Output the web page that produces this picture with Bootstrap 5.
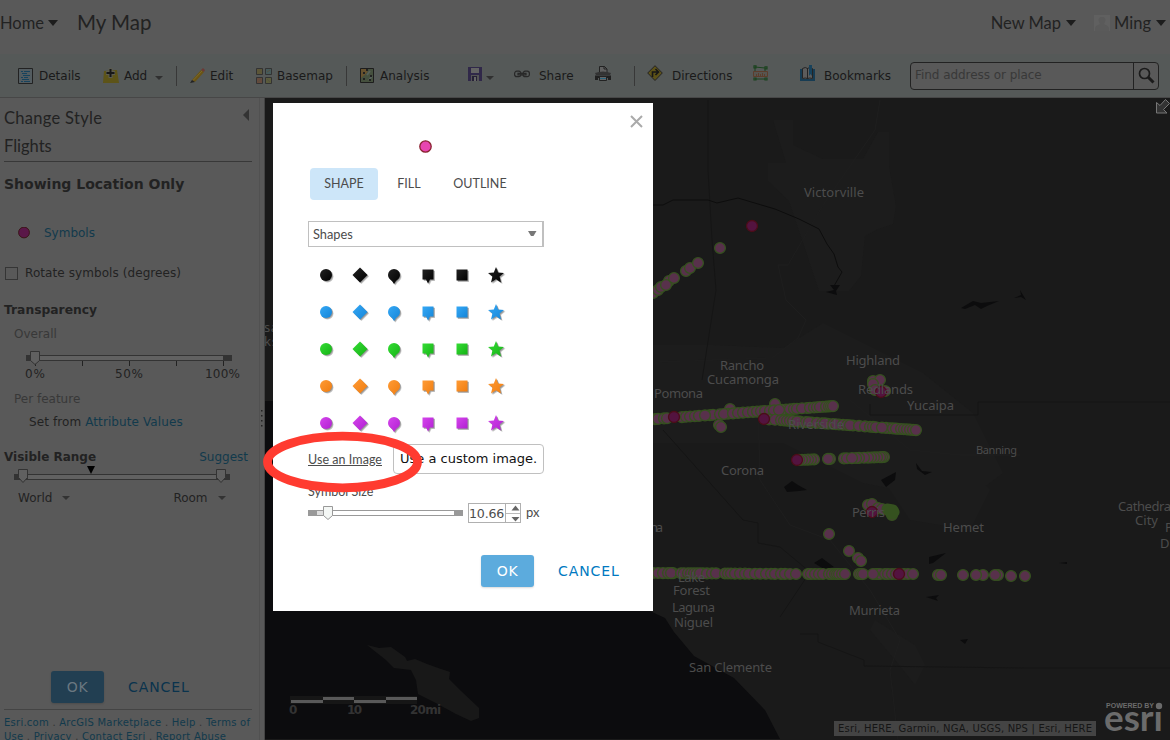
<!DOCTYPE html>
<html lang="en">
<head>
<meta charset="utf-8">
<meta name="viewport" content="width=device-width, initial-scale=1">
<title>My Map</title>
<link href="https://cdn.jsdelivr.net/npm/bootstrap@5.3.0/dist/css/bootstrap.min.css" rel="stylesheet">
<style>
body{width:1170px;height:740px;overflow:hidden;background:#595959;color:#1f1f1f;font:12px/16px "DejaVu Sans",sans-serif}
.avenir{font-family:Lato,"Noto Sans",sans-serif}
svg{display:block;flex:none}
a{text-decoration:none}
.topbar{height:54px;font-size:16.500px;color:#222}
.topbar .title{font-size:20.500px;margin:-10px 0 0 19px}
.topbar svg,.home,.newmap,.ming{margin-top:-8px}
.topbar .nm-caret{margin-left:5px}.topbar .avatar{margin-left:18px}.ming{margin-left:4px}.topbar .mg-caret{margin:-8px 4px 0 5px}
.toolbar{height:44px;background:#555958;border-bottom:1px solid #474747;padding-left:18px;display:grid;
 grid-template-columns:85px 73px 14px 66px 90px 14px 108px 46px 81px 39px 13px 106px 47px 110px 249px;align-items:center;color:#1a1a1a}
.tool{display:flex;align-items:center;white-space:nowrap}
.rule{width:1px;height:20px;background:#383838}
.finder{height:28px;border:1px solid #222;border-radius:4px;background:#595959;color:#383838}
.finder span{margin-top:-2px;letter-spacing:-.05px}
.find-btn{width:25px;border-left:1px solid #222;padding-left:4px}
.workspace{height:642px}
.side{width:265px;border-right:1px solid #444;background:#595959;color:#222}
.side-in{width:260px;border-right:1px solid #515151;padding-left:4px}
.rowx{display:flex;align-items:center;white-space:nowrap}
.lnk{color:#123a4c}
.muted{color:#383838}
.s-head{font-size:16.500px;height:40px;padding-right:10px;letter-spacing:.3px}
.s-head svg{margin-top:-6px}
.s-layer{font-size:16.500px;height:24px;padding-bottom:7px;margin-right:7px;border-bottom:1px solid #383838}
.s-title{font-size:14px;height:44px}
.s-sym{height:54px;padding-left:14px}.s-sym a{margin-left:13px}
.s-rot{height:26px;letter-spacing:.08px}.box{width:13px;height:13px;border:1px solid #353535;margin:0 7px 0 1px}
.s-tr{height:47px;font-size:12.300px}
.ind{height:2px;padding-left:10px}
.gap-sl{height:10px}
.s-per{height:33px}.s-set{height:14px;padding-left:25px;letter-spacing:.1px}
.s-vis{height:56px;padding-right:11px;margin-bottom:-19px}
.s-room{height:20px;padding-left:14px;gap:10px}.rm{margin-left:93px}
.s-btn{height:202px;padding:157px 0 0 47px;margin-right:7px;border-bottom:1px solid #444}
.foot{font-size:10px;line-height:14px;letter-spacing:.25px;color:#333;padding-top:6px;white-space:nowrap}
.btn-esri{width:53px;height:32px;border-radius:3px;padding:0;font:14px "DejaVu Sans",sans-serif;letter-spacing:.7px;background:#5cabdd;color:#fff;border:0;box-shadow:0 1px 2px rgba(0,0,0,.15)}
.dim-btn{background:#223f52;color:#6a7780}
.cancel{font-size:14px;letter-spacing:.9px;color:#0079c1}
.dimc{color:#0a334d;margin-left:24px}
.dialog{position:absolute;left:273px;top:103px;width:380px;height:508px;background:#fff;color:#4c4c4c;padding-left:35px}
.x-row{padding:12px 10px 0 0;height:37px}.cur{margin-bottom:15px}
.tabs{padding-left:2px;height:53px}
.tabx{height:32px;border-radius:4px;font-size:12.500px;width:68px;justify-content:center}
.t-fill{width:62px}.t-out{width:80px}
.tabx.on{background:#cde6f9}
.picker{width:236px;height:26px;border:1px solid #c0c0c0;border-right-width:2px;font-size:12.800px;padding:0 5px 0 4px}
.symgrid{display:grid;grid-template-columns:repeat(6,34px);grid-auto-rows:37px;padding:9.500px 0 0 1.300px;height:197px}
.use-row{height:30px}
.ui{font-size:12.500px;width:75px;white-space:nowrap;margin-top:2px;letter-spacing:.05px}
.tip{width:151px;height:30px;border:1px solid #c0c0c0;border-radius:4px;background:#fff;color:#111;font-size:13px;padding-left:6px;margin-left:10px}
.sz{font-size:12.500px;height:29px;padding-top:10px}
.spin{width:53px;height:20px;border:1px solid #b0b0b0;font-size:12.600px}
.spin span{width:37px;letter-spacing:-.2px;padding-top:2px}
.spin-arrows{width:15px;height:18px;border-left:1px solid #b0b0b0}
.px{margin:-2px 0 0 5px;font-size:13px}.acts{padding:32px 0 0 173px}
.ring{position:absolute;left:262px;top:430px;z-index:5}
.lbl{font-family:"Noto Sans",sans-serif;font-size:13px;fill:#4c4c4c}
</style>
</head>
<body class="position-relative">
<header class="topbar d-flex align-items-center avenir">
  <span class="home">Home</span>
  <svg width="10" height="6" class="ms-1"><path d="M0 0h10l-5 6z" fill="#1d1d1d"/></svg>
  <span class="title">My Map</span>
  <span class="ms-auto newmap">New Map</span>
  <svg width="10" height="6" class="nm-caret"><path d="M0 0h10l-5 6z" fill="#1d1d1d"/></svg>
  <svg width="16" height="16" class="avatar"><path d="M0 0h16v16H0z" fill="#606060"/><path d="M8 2c3 0 4 2 3 5l-1 2c1 1 4 1 5 4v3H1v-3c1-3 4-3 5-4L5 7C4 4 5 2 8 2" fill="#5a5a5a"/></svg>
  <span class="ming">Ming</span>
  <svg width="10" height="6" class="mg-caret"><path d="M0 0h10l-5 6z" fill="#1d1d1d"/></svg>
</header>
<nav class="toolbar">
  <div class="tool"><svg width="21" height="16"><path d="M.5.5h14v15H.5z" fill="#535c60" stroke="#222"/><path d="M3 3.500h2M6 3.500h6M4 5.500h5M5 7.500h7M3 9.500h2M6 9.500h4M4 11.500h7M3 13.500h2M6 13.500h6" stroke="#17435d" fill="none"/></svg>Details</div>
  <div class="tool"><svg width="21" height="16"><path d="M1 3l13-1 2 13H0z" fill="#5d5418"/><path d="M7.500 0v10M3 5h9" stroke="#5c5c50" stroke-width="4"/><path d="M7.500 1v8M3.500 5h8" stroke="#171717" stroke-width="2"/></svg>Add<svg width="8" height="4" class="ms-2 mt-1"><path d="M0 0h8l-4 4z" fill="#303030"/></svg></div>
  <i class="rule"></i>
  <div class="tool"><svg width="20" height="16"><path d="M2 12L11 2l3 2-9 10z" fill="#6a5414"/><path d="M3 12.500L12 3" stroke="#7d6a2a"/><path d="M11 2l2-2 2 2-1 2z" fill="#6b3a35"/><path d="M2 12l-2 3 5-1z" fill="#222"/></svg>Edit</div>
  <div class="tool"><svg width="21" height="16"><g stroke="#333" fill="#5c5638"><path d="M.5.5h6v6h-6z"/><path d="M9.500.5h6v6h-6z" fill="#465a5a"/><path d="M.5 9.500h6v6h-6z" fill="#654a3c"/><path d="M9.500 9.500h6v6h-6z" fill="#5b5c3c"/></g><path d="M11 4l3-2M2 14l3-3M11 11l3 3" stroke="#555040"/></svg>Basemap</div>
  <i class="rule"></i>
  <div class="tool"><svg width="20" height="15"><path d="M.5.5h13v14H.5z" fill="#45503e" stroke="#1d1d1d"/><path d="M1 10V1h7L7 5z" fill="#67522e"/><path d="M7 7l3-4M9 12l3-4" stroke="#55605a" stroke-width="2"/><path d="M6 1h2v2H6zM3 4h2v2H3zM10 7h2v2h-2zM3 10h2v2H3zM9 11h2v2H9z" fill="#222"/></svg>Analysis</div>
  <div class="tool"><svg width="14" height="14" class="mb-1"><path d="M0 0h14v14H0z" fill="#302849"/><path d="M3 1h8v5H3z" fill="#636363"/><path d="M3 8h8v6H3z" fill="#555"/><path d="M4 9h5v5H4z" fill="#252036"/><path d="M6 10h2v4H6z" fill="#666"/></svg><svg width="8" height="4" class="ms-1 mt-1"><path d="M0 0h8l-4 4z" fill="#303030"/></svg></div>
  <div class="tool"><svg width="25" height="8" class="mb-1"><g fill="none" stroke="#282828" stroke-width="1.200"><rect x=".6" y="1.200" width="6.400" height="5.400" rx="2.200"/><rect x="9" y="1.200" width="6.400" height="5.400" rx="2.200"/><path d="M4 3.400h8v1.400H4z"/></g></svg>Share</div>
  <div class="tool"><svg width="16" height="16" class="mb-1"><path d="M4.500 7V.5h5L12 3v4" fill="#606060" stroke="#222"/><path d="M9 0v3h3" fill="none" stroke="#222"/><path d="M0 7q8-3 16 0l-1 2H1z" fill="#333"/><path d="M0 9.500h16v4.500h-3v-2H3v2H0z" fill="#202020"/><path d="M4.500 10.500h7v4h-7z" fill="#666" stroke="#222"/><path d="M5 12.500h6" stroke="#28627b"/></svg></div>
  <i class="rule"></i>
  <div class="tool"><svg width="25" height="17" class="mb-1"><path d="M8 .7L15.300 8 8 15.500.7 8z" fill="#5d5218" stroke="#242424"/><path d="M5.500 12V7h5M8.500 4l3 3-3 3" fill="none" stroke="#171717" stroke-width="1.600"/></svg>Directions</div>
  <div class="tool"><svg width="15" height="17" class="mb-1"><g fill="none" stroke="#1b431f"><path d="M2 2l10 1M2 14h10M2 3v3M12 4v2" /><path d="M1 .8h2v2H1zM12 1.800h2v2h-2zM1 13h2v2H1zM12 13h2v2h-2z" stroke-width="1.200"/></g><path d="M.5 6.500h14v5H.5z" fill="#575550" stroke="#5c3d2c"/><path d="M3.500 9v2M5.500 8v3M7.500 9v2M9.500 8v3M11.500 9v2" stroke="#5c3d2c"/></svg></div>
  <div class="tool"><svg width="24" height="17" class="mb-1"><path d="M1 4v11h13V4" fill="none" stroke="#173c53" stroke-width="2"/><path d="M2.500 13.500V3.500q3-2 5 0 2-2 5 0v10q-3-1-5 0-2-1-5 0z" fill="#5c5c5c" stroke="#242424"/><path d="M7.500 3v11" stroke="#242424"/><path d="M9 0h3v11l-1.500-2L9 11z" fill="#17425c"/></svg>Bookmarks</div>
  <div class="finder d-flex align-items-center"><span class="ps-1 flex-fill">Find address or place</span><div class="h-100 d-flex align-items-center find-btn"><svg width="17" height="17"><circle cx="6.500" cy="6.500" r="5" fill="none" stroke="#1b1b1b" stroke-width="1.700"/><path d="M10 10l5.500 5.500" stroke="#1b1b1b" stroke-width="3"/></svg></div></div>
</nav>
<main class="d-flex workspace">
  <aside class="side d-flex">
    <div class="side-in">
      <div class="rowx avenir s-head">Change Style<svg width="6" height="12" class="ms-auto"><path d="M6 0v12L0 6z" fill="#333"/></svg></div>
      <div class="rowx avenir s-layer">Flights</div>
      <div class="rowx fw-bold s-title">Showing Location Only</div>
      <div class="rowx s-sym"><svg width="13" height="13"><circle cx="6" cy="5.500" r="5.400" fill="#5a1748" stroke="#3b1517"/></svg><a class="lnk">Symbols</a></div>
      <div class="rowx s-rot"><span class="box"></span>Rotate symbols (degrees)</div>
      <div class="rowx fw-bold s-tr">Transparency</div>
      <div class="rowx muted ind">Overall</div>
      <div class="gap-sl"></div>
      <svg width="250" height="37" viewBox="4 345 250 37"><path d="M26 355h206v6H26z" fill="#333"/><path d="M40 356h183v4H40z" fill="#616161"/><path d="M35.500 361v5M82.500 361v5M129.500 361v5M176.500 361v5M223.500 361v5" stroke="#222"/><path d="M30.500 351.500h9v9l-4.500 4-4.500-4z" fill="#606060" stroke="#333"/><g font-size="12" fill="#222"><text x="25" y="378" textLength="20">0%</text><text x="115" y="378" textLength="28">50%</text><text x="205" y="378" textLength="35">100%</text></g></svg>
      <div class="rowx muted ind s-per">Per feature</div>
      <div class="rowx s-set"><span>Set from <a class="lnk">Attribute Values</a></span></div>
      <div class="rowx s-vis"><b>Visible Range</b><a class="lnk ms-auto">Suggest</a></div>
      <svg width="250" height="22" viewBox="4 466 250 22"><path d="M14 474h216v6H14z" fill="#333"/><path d="M28 475h188v4H28z" fill="#616161"/><path d="M87 466h8l-4 8z" fill="#000"/><path d="M18.500 469.500h9v8l-4.500 5-4.500-5zM216.500 469.500h9v8l-4.500 5-4.500-5z" fill="#606060" stroke="#333"/></svg>
      <div class="rowx s-room"><span>World</span><svg width="8" height="4"><path d="M0 0h8l-4 4z" fill="#333"/></svg><span class="rm">Room</span><svg width="8" height="4"><path d="M0 0h8l-4 4z" fill="#333"/></svg></div>
      <div class="rowx s-btn"><button class="btn btn-esri dim-btn">OK</button><span class="cancel dimc">CANCEL</span></div>
      <div class="foot"><a class="lnk">Esri.com</a> . <a class="lnk">ArcGIS Marketplace</a> . <a class="lnk">Help</a> . <a class="lnk">Terms of</a><br><a class="lnk">Use</a> . <a class="lnk">Privacy</a> . <a class="lnk">Contact Esri</a> . <a class="lnk">Report Abuse</a></div>
    </div>
    <svg width="4" height="20" class="align-self-center"><path d="M1 1h1.500v1.500H1zM1 6h1.500v1.500H1zM1 11h1.500v1.500H1zM1 16h1.500v1.500H1z" fill="#222"/></svg>
  </aside>
  <svg width="905" height="642" viewBox="265 98 905 642" id="map"></svg>
</main>
<section class="dialog">
  <div class="d-flex justify-content-end x-row"><svg width="13" height="13"><path d="M1 1l11 11M12 1L1 12" stroke="#aaa" stroke-width="2"/></svg></div>
  <svg width="236" height="13" class="cur"><circle cx="117.500" cy="6.500" r="5.700" fill="#e846b0" stroke="#8a2430" stroke-width="1.300"/></svg>
  <div class="d-flex tabs avenir"><div class="tabx on rowx">SHAPE</div><div class="tabx rowx t-fill">FILL</div><div class="tabx rowx t-out">OUTLINE</div></div>
  <div class="picker d-flex align-items-center justify-content-between avenir"><span>Shapes</span><svg width="10" height="6"><path d="M1 0h8.500L6.500 5h-2.500z" fill="#777"/></svg></div>
  <div class="symgrid" id="sym"></div>
  <div class="d-flex align-items-center use-row"><span class="avenir text-decoration-underline ui">Use an Image</span><div class="tip rowx">Use a custom image.</div></div>
  <div class="avenir sz">Symbol Size</div>
  <div class="d-flex align-items-center"><svg width="160" height="20" viewBox="308 503 160 20"><path d="M308 510h155v6H308z" fill="#999"/><path d="M317 511h7v4h-7z" fill="#ddd"/><path d="M328 511h126v4H328z" fill="#fff"/><path d="M323.500 506.500h9v9l-4.500 4-4.500-4z" fill="#f4f7f5" stroke="#999"/></svg><div class="spin d-flex align-items-center"><span>10.66</span><div class="spin-arrows"><svg width="14" height="18"><path d="M5.500 6.500h8l-4-5zM5.500 13h8l-4 4.500z" fill="#666"/><path d="M0 9.500h14" stroke="#bbb"/></svg></div></div><span class="px avenir">px</span></div>
  <div class="d-flex align-items-center acts"><button class="btn btn-esri">OK</button><span class="cancel ms-4">CANCEL</span></div>
</section>
<svg class="ring" width="162" height="64" viewBox="262 430 162 64"><ellipse cx="342.500" cy="462" rx="75" ry="25.800" fill="none" stroke="#ff3b30" stroke-width="8.800"/></svg>
<script>
// Symbol palette: six shapes in five colours
const shapes=['<circle cx="17" cy="18" r="6"/>','<path d="M17 10.500l7.500 7.500-7.500 7.500L9.500 18z"/>','<path d="M17 12a6 6 0 0 1 6 6c0 3-2 4-4 6l-2 3-2-3c-2-2-4-3-4-6a6 6 0 0 1 6-6z"/>','<path d="M11.500 12.500h11v10h-3.500l-2 4-2-4h-3.500z"/>','<path d="M11.500 12.500h11v11h-11z"/>','<path d="M17 10l2.200 5.500 5.800.4-4.400 3.700 1.400 5.800-5-3.200-5 3.200 1.400-5.800L9 15.900l5.800-.4z"/>'];
const cols=[['#222','#000'],['#35a8f5','#1585d8'],['#35dc35','#15b315'],['#ff9b35','#f07d10'],['#d545ec','#b120d2']];
document.getElementById('sym').innerHTML=cols.map((c,i)=>shapes.map((s,j)=>`<svg width="34" height="37"><defs><linearGradient id="g${i}${j}" x1="0" y1="0" x2="1" y2="1"><stop stop-color="${c[0]}"/><stop offset="1" stop-color="${c[1]}"/></linearGradient></defs><g fill="#000" opacity=".22" transform="translate(1.500 1.500)">${s}</g><g fill="#000" opacity=".25" transform="translate(.8 .8)">${s}</g><g fill="url(#g${i}${j})">${s}</g></svg>`).join('')).join('');
// Map
let m='<path d="M265 98h905v642H265z" fill="#1a1a1a"/>';
m+='<path d="M265 401h20l365 210 15 7 9 14 20 24 40 22 31 32 15 29H265z" fill="#0c0c0e"/>';
m+='<path d="M367 645l12 3 12-1 14 10 2 4 8-2 12 5 14 5 9 3-1 7 12 12 18 17 0 10-8 3-15-7-22-12-16-8-2-14-5-10-17-2-8-8z" fill="#181818"/>';
m+='<g fill="#1c1c1c"><path d="M773 120h20v25l30 14h40l15-27h11v34l7 40-3 18-15 5-13 7-4 40-12 15-30 0-10-30-20-60-21-20v-18h18zM653 345l60 0 70 3 40-25 40 20 60 30 50 40 30 60-40 30-100-20-80-40-130 0zM870 410l60 20 60 60-20 40-60-10-40-60zM875 620l40 25 10 20-10 20-20-25-25-30z"/></g>';
m+='<g fill="none" stroke="#1e1e1e"><path d="M880 100l-5 30-52 75-35 60-10 0 8 35 20 20-8 18-26 20-119 4M758 400l2 80 30 45 40 15 40 50 30 50-10 30 8 70M850 400l60 50 50 5 60 0"/></g><g fill="none" stroke="#151515"><path d="M708 100v70l4 70 4 50-14 90M663 430l80 90 15 3v20l22 4 30 25-30 45M870 404v11h108v-13h192M800 634h18v8l46 18v6l160 2h147"/></g>';
m+='<path d="M653 205l10 0 10-5h35l9 3 21-5 20 6 17 5 24 10 20 10 8 15 7 10 4 13 4 5-8 14" fill="none" stroke="#0d0d0d"/>';
m+='<g fill="#0c0c0d"><path d="M826 292l8-2-4-5h10l-4 6 1 4zM961 308l12-7 8 2 18-2-12 5-6 3-6-4-10 4zM1014 298l7-3-1-5 6 10-5-3zM784 487l8-6 6 4 9 5-8 1-12 1zM881 480l15-8-1 8-9 7zM916 463l6 8 10 1-7 3-8-6zM814 563l8-5 12 9-10 2zM929 557l17-4-13 10-4 1zM926 597l13-2-3 3 2 3zM1059 563l8-1v2zM960 640l8-1-3 5z"/></g>';
const dot=(x,y)=>`<circle cx="${x}" cy="${y}" r="5.400" fill="#58314b" stroke="#35511f" stroke-width="1.300"/>`;
const sel=(x,y)=>`<circle cx="${x}" cy="${y}" r="5.500" fill="#53133f" stroke="#4b0d18" stroke-width="1.300"/>`;
// A flight path: dots along the line from (x0, y0) to (x1, y1)
const track=(x0,y0,x1,y1,xs)=>xs.map(x=>dot(x,+(y0+(x-x0)*(y1-y0)/(x1-x0)).toFixed(1))).join('');
m+=[[653,293],[658,290],[661,287],[669,281],[666,285],[674,278],[686,271],[690,268],[698,263],[720,248],[719,425],[721,427],[775,404],[730,409]].map(p=>dot(...p)).join('');
m+=track(656,419,834,406,[655,658,664,667,682,686,690,695,699,710,713,705,720,728,724,733,738,743,748,753,757,761,765,770,774,786,782,779,790,794,797,807,802,810,814,817,823,820,826,829,831,833]);
m+=track(764,419,915,430,[769,775,781,784,787,790,793,800,797,806,812,809,817,822,828,825,833,839,836,843,847,853,850,859,865,870,873,876,890,886,882,893,898,896,901,904,907,910,913,916]);
m+=track(797,460,885,457,[814,811,808,805,802,799,830,828,884,882,880,877,874,871,868,864,859,856,844,847,852]);
m+=track(653,573,796,574,[653,658,663,668,673,671,681,684,688,691,694,697,703,700,707,712,716,725,728,731,735,740,745,749,755,760,766,771,775,781,785,790,796]);
m+=[808,811,815,819,823,829,832,835,837,839,842,845,859,861,863,876,878,880,873,885,888,892,896,904,908,913].map(x=>dot(x,574)).join('');
m+=[938,941,963,983,976,998,995,1011,1025].map(x=>dot(x,x>1000?576:575)).join('').replace('x','x');
m+=[[829,534],[849,551],[858,558],[861,561],[873,381],[880,380],[873,384],[885,391],[875,390],[868,505],[872,504],[878,508],[882,509],[892,515]].map(p=>dot(...p)).join('');
m+='<path d="M887 509l6 1 1 2-2 2z" stroke="#35511f" fill="#35511f" stroke-width="11" stroke-linejoin="round"/>';
m+=[[752,226],[674,417],[764,419],[797,460],[881,392],[872,512],[899,574]].map(p=>sel(...p)).join('');
[['Victorville',804,197,60],['Rancho',720,370,44],['Cucamonga',707,384,72],['Pomona',654,398,49],['Highland',846,365,54],['Redlands',858,394,55],['Yucaipa',907,410,47],['Riverside',788,429,56],['Corona',721,475,43],['Perris',852,517,33],['Hemet',943,532,41],['Lake',678,582,27],['Forest',673,595,37],['Laguna',672,612,43],['Niguel',674,627,39],['Murrieta',849,615,51],['San Clemente',689,672,83],['Cathedral',1118,511,56],['City',1135,525,23],['P',1165,532,7],['D',1160,548,9],['sa',264,332,14],['ks',264,346,14],['na',650,532,13]].forEach(a=>m+=`<text class="lbl" x="${a[1]}" y="${a[2]}" textLength="${a[3]}">${a[0]}</text>`);
m+='<text class="lbl" x="976" y="454" textLength="41" style="font-size:11px">Banning</text>';
m+='<path d="M290 696h127v8H290z" fill="#161616"/><path d="M291 700h32v3h-32zM323 697h31v3h-31zM354 700h32v3h-32zM386 697h31v3h-31z" fill="#595959"/><g font-size="12" font-weight="bold" fill="#333"><text x="289" y="714">0</text><text x="347" y="714" textLength="15">10</text><text x="410" y="714" textLength="31">20mi</text></g>';
m+='<path d="M834 721h262v15H834z" fill="#444"/><text x="838" y="732" font-size="10" fill="#151515" textLength="254">Esri, HERE, Garmin, NGA, USGS, NPS | Esri, HERE</text>';
m+='<g fill="#6b6b6b" font-family="Liberation Sans"><text x="1106" y="708" font-size="7" font-weight="bold" textLength="48" lengthAdjust="spacingAndGlyphs">POWERED BY</text><circle cx="1159" cy="706" r="3.200"/><text x="1104" y="731" font-family="Lato" font-weight="bold" font-size="36" textLength="59" lengthAdjust="spacingAndGlyphs">esr&#305;</text></g>';
m+='<path d="M1156.500 102.500v10.500h10.500l-3.500-3.500 6-6-4-4-5.500 6z" fill="#333" stroke="#777"/>';
document.getElementById('map').innerHTML=m;
</script>
<script src="https://cdn.jsdelivr.net/npm/bootstrap@5.3.0/dist/js/bootstrap.bundle.min.js"></script>
</body>
</html>
